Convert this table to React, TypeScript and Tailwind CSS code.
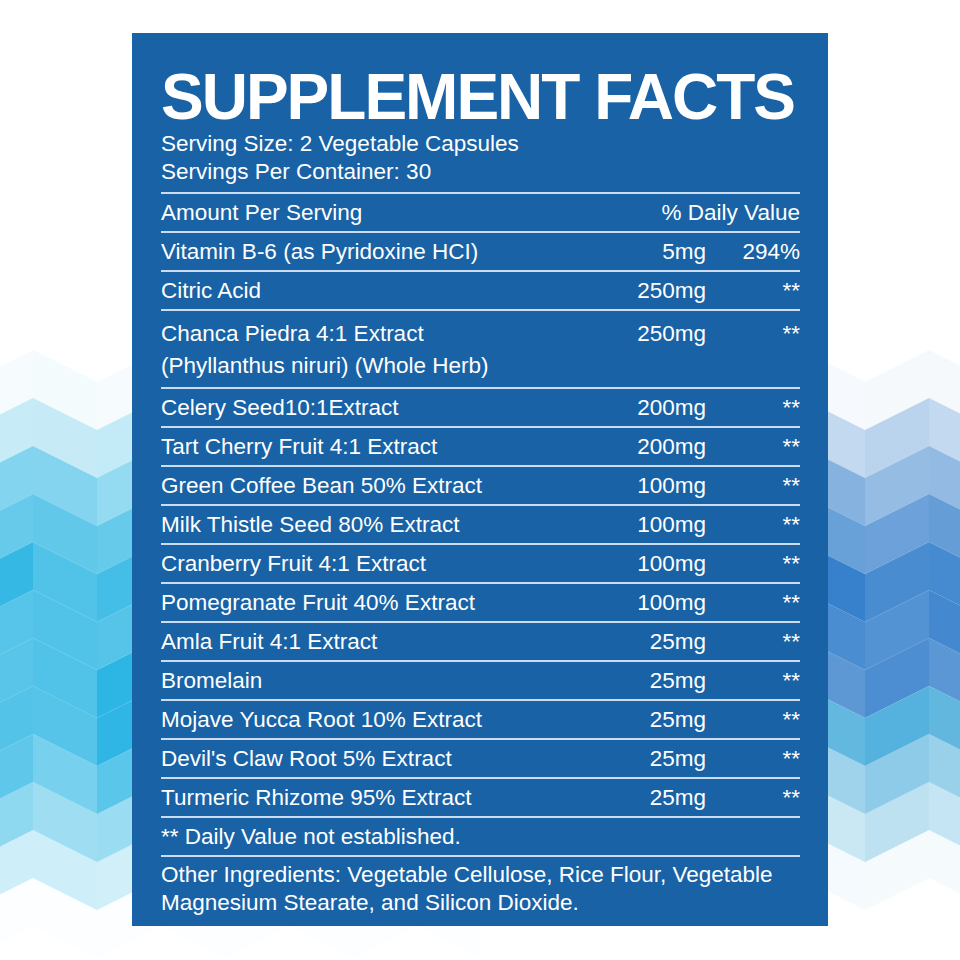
import React from 'react';

type Row = { name: React.ReactNode; amount: string; dv: string; tall?: boolean };

const rows: Row[] = [
  { name: 'Vitamin B-6 (as Pyridoxine HCI)', amount: '5mg', dv: '294%' },
  { name: 'Citric Acid', amount: '250mg', dv: '**' },
  {
    name: (
      <>
        Chanca Piedra 4:1 Extract
        <br />
        (Phyllanthus niruri) (Whole Herb)
      </>
    ),
    amount: '250mg',
    dv: '**',
    tall: true,
  },
  { name: 'Celery Seed10:1Extract', amount: '200mg', dv: '**' },
  { name: 'Tart Cherry Fruit 4:1 Extract', amount: '200mg', dv: '**' },
  { name: 'Green Coffee Bean 50% Extract', amount: '100mg', dv: '**' },
  { name: 'Milk Thistle Seed 80% Extract', amount: '100mg', dv: '**' },
  { name: 'Cranberry Fruit 4:1 Extract', amount: '100mg', dv: '**' },
  { name: 'Pomegranate Fruit 40% Extract', amount: '100mg', dv: '**' },
  { name: 'Amla Fruit 4:1 Extract', amount: '25mg', dv: '**' },
  { name: 'Bromelain', amount: '25mg', dv: '**' },
  { name: 'Mojave Yucca Root 10% Extract', amount: '25mg', dv: '**' },
  { name: "Devil's Claw Root 5% Extract", amount: '25mg', dv: '**' },
  { name: 'Turmeric Rhizome 95% Extract', amount: '25mg', dv: '**' },
];

// faceted chevron backdrop
function Backdrop() {
  const cells: { pts: string; fill: string; op: number }[] = [];
  for (let c = 0; c < 16; c++) {
    const x0 = -31 + c * 64;
    const up = c % 2 === 0;
    for (let r = -1; r < 14; r++) {
      const y0 = 350 + r * 48;
      const pts = up
        ? `${x0},${y0 + 32} ${x0 + 64},${y0} ${x0 + 64},${y0 + 48} ${x0},${y0 + 80}`
        : `${x0},${y0} ${x0 + 64},${y0 + 32} ${x0 + 64},${y0 + 80} ${x0},${y0 + 48}`;
      const cy = y0 + 40;
      const cx = x0 + 32;
      const rnd = Math.abs(Math.sin(c * 12.9898 + r * 78.233) * 43758.5453) % 1;
      let fill = '#2bb5e3';
      let center = 650;
      let spread = 270;
      if (cx > 480) {
        fill = cy < 680 ? '#3680cb' : '#43a9d9';
        center = 630;
        spread = 250;
      }
      const t = Math.max(0, 1 - Math.abs(cy - center) / spread);
      const op = Math.min(1, t * 1.5) * (0.78 + 0.22 * rnd);
      cells.push({ pts, fill, op });
    }
  }
  return (
    <svg className="absolute inset-0" width="960" height="960" viewBox="0 0 960 960">
      {cells.map((p, i) => (
        <polygon key={i} points={p.pts} fill={p.fill} fillOpacity={p.op} />
      ))}
    </svg>
  );
}

export default function App() {
  return (
    <div
      className="relative w-[960px] h-[960px] overflow-hidden bg-white text-white"
      style={{ fontFamily: '"Liberation Sans", Arial, sans-serif' }}
    >
      <Backdrop />
      <div className="relative flex justify-center pt-[33px]">
        <div className="w-[696px] h-[893px] bg-[#1862a5] pl-[29px] pr-[28px] pt-[31px]">
          <h1 className="text-[64px] leading-[66px] font-bold tracking-[-2px] whitespace-nowrap">SUPPLEMENT FACTS</h1>
          <div className="text-[22.5px] leading-[28px] pb-[6px] border-b-2 border-[#cadcf0]">
            <div>Serving Size: 2 Vegetable Capsules</div>
            <div>Servings Per Container: 30</div>
          </div>
          <div className="flex h-[39px] items-center justify-between text-[22.5px] border-b-2 border-[#cadcf0]">
            <span>Amount Per Serving</span>
            <span>% Daily Value</span>
          </div>
          {rows.map((r, i) => (
            <div
              key={i}
              className={
                r.tall
                  ? 'flex items-start text-[22.5px] leading-[32px] pt-[7px] pb-[5px] border-b-2 border-[#cadcf0]'
                  : 'flex h-[39px] items-center text-[22.5px] leading-[32px] border-b-2 border-[#cadcf0]'
              }
            >
              <span className="flex-1">{r.name}</span>
              <span className="text-right">{r.amount}</span>
              <span className="w-[94px] text-right">{r.dv}</span>
            </div>
          ))}
          <div className="flex h-[39px] items-center text-[22.5px] border-b-2 border-[#cadcf0]">
            ** Daily Value not established.
          </div>
          <p className="pt-[4px] text-[22.5px] leading-[28px]">
            Other Ingredients: Vegetable Cellulose, Rice Flour, Vegetable
            <br />
            Magnesium Stearate, and Silicon Dioxide.
          </p>
        </div>
      </div>
    </div>
  );
}
